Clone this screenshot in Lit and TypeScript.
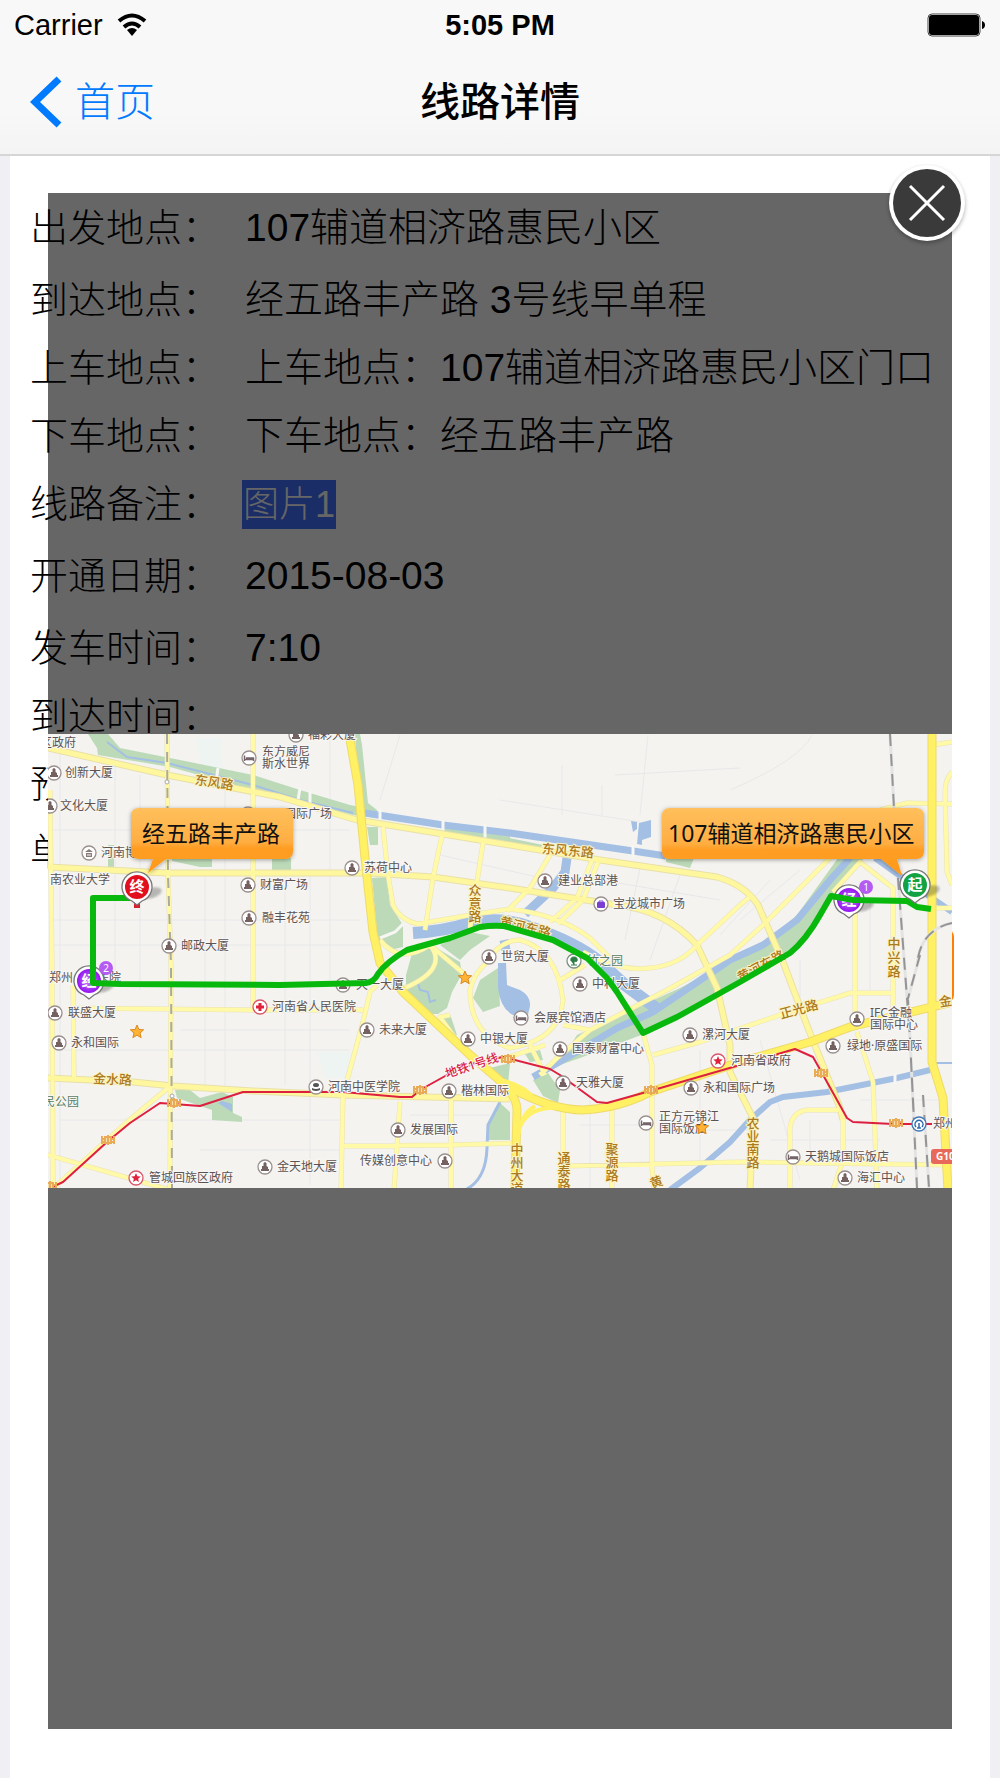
import { LitElement, html, svg, css } from "lit";
import { customElement, state } from "lit/decorators.js";

type Kind = "office" | "hotel" | "museum" | "school" | "mall" | "park" | "gov" | "hospital" | "rail";
/** icon kind, icon centre x, y, text x, lines of text */
type Poi = [Kind | null, number, number, number, string, string?];

const POIS: Poi[] = [
  ["office", 54, 773, 65, "创新大厦"],
  ["office", 50, 806, 60, "文化大厦"],
  ["museum", 89, 853, 101, "河南博物院"],
  ["office", 169, 946, 181, "邮政大厦"],
  ["office", 248, 885, 260, "财富广场"],
  ["office", 249, 918, 262, "融丰花苑"],
  ["hotel", 249, 758, 262, "东方威尼", "斯水世界"],
  ["office", 248, 814, 284, "国际广场"],
  ["office", 296, 735, 308, "福彩大厦"],
  ["office", 352, 868, 364, "苏荷中心"],
  ["office", 545, 881, 558, "建业总部港"],
  ["mall", 601, 904, 613, "宝龙城市广场"],
  ["office", 489, 957, 501, "世贸大厦"],
  ["park", 574, 961, 587, "竹之园"],
  ["office", 580, 984, 592, "中科大厦"],
  ["hotel", 521, 1018, 534, "会展宾馆酒店"],
  ["office", 468, 1039, 480, "中银大厦"],
  ["office", 560, 1049, 572, "国泰财富中心"],
  ["office", 563, 1083, 576, "天雅大厦"],
  ["office", 690, 1035, 702, "漯河大厦"],
  ["gov", 718, 1061, 731, "河南省政府"],
  ["office", 691, 1088, 703, "永和国际广场"],
  ["hotel", 646, 1123, 659, "正方元锦江", "国际饭店"],
  ["office", 857, 1019, 870, "IFC金融", "国际中心"],
  ["office", 833, 1046, 847, "绿地·原盛国际"],
  ["rail", 919, 1124, 933, "郑州站"],
  ["hotel", 793, 1157, 805, "天鹅城国际饭店"],
  ["office", 845, 1178, 857, "海汇中心"],
  ["office", 55, 1013, 68, "联盛大厦"],
  ["office", 59, 1043, 71, "永和国际"],
  ["gov", 136, 1178, 149, "管城回族区政府"],
  ["office", 265, 1167, 277, "金天地大厦"],
  ["office", 343, 985, 356, "天一大厦"],
  ["hospital", 260, 1007, 272, "河南省人民医院"],
  ["office", 367, 1030, 379, "未来大厦"],
  ["school", 316, 1087, 328, "河南中医学院"],
  ["office", 449, 1091, 461, "楷林国际"],
  ["office", 398, 1130, 410, "发展国际"],
  ["office", 445, 1161, 360, "传媒创意中心"],
  [null, 0, 743, 40, "区政府"],
  [null, 0, 880, 50, "南农业大学"],
  [null, 0, 978, 49, "郑州人民医院"],
];

/** text, x, y, rotation */
const ROADS: [string, number, number, number][] = [
  ["东风路", 195, 779, 9],
  ["东风东路", 542, 848, 5],
  ["黄河东路", 500, 921, 13],
  ["金水路", 93, 1078, 3],
  ["正光路", 780, 1014, -15],
  ["黄河东路", 738, 978, -28],
  ["金", 939, 1002, -10],
  ["黄", 650, 1184, -20],
];

/** text, x, first y, step */
const VERTICAL_ROADS: [string, number, number, number][] = [
  ["众意路", 475, 890, 13],
  ["聚源路", 612, 1149, 13],
  ["通泰路", 564, 1158, 13],
  ["中州大道", 517, 1149, 13],
  ["农业南路", 753, 1123, 13],
  ["中兴路", 894, 943, 14],
];

const GREENS = [
  "M88 734H108L120 748L190 762L253 775L300 790L350 805L377 810V818L353 815L253 790L170 767L98 755L97 748Z",
  "M355 734H360L362 745L368 803L377 810L360 814Z",
  "M367 827H378V845H370Z",
  "M372 878L387 877L390 905L403 925V947L390 950L378 942Z",
  "M172 858H212V867H200L172 861Z",
  "M272 858H291V872H272Z",
  "M108 845H114V867H108Z",
  "M413 950L430 944L460 962L462 974L452 992L447 1008L438 1014L428 1014L406 998V975Z",
  "M438 1018L450 1014L457 1035L448 1034Z",
  "M480 980L498 968L500 1006L483 1012L473 998Z",
  "M440 945L470 932L490 936L470 950L460 960Z",
  "M838 858H864L832 896L818 922L795 950L741 982L644 1034L580 1058L557 1066L577 1035L680 988L763 945L797 915Z",
  "M666 858H694L690 868L666 862Z",
  "M443 825L510 836V844L443 832Z",
  "M500 836L543 845L538 850L500 843Z",
  "M487 1140V1125L500 1103L510 1112V1140Z",
  "M533 1080L548 1073L560 1090L558 1103L543 1096Z",
  "M525 1054L540 1050L543 1060L530 1062Z",
  "M482 1070L510 1063L508 1085L495 1080Z",
  "M175 1090L190 1090L200 1098L222 1092L233 1097V1113L242 1117V1122L212 1120V1110L177 1098Z",
];

const WATERS: [string, number][] = [
  ["M107 742L127 757L167 763L253 785L300 800L353 813", 2],
  ["M365 813L443 825L510 833L633 851L666 856", 7],
  ["M875 858L903 878L952 912", 6],
  ["M413 933Q445 931 470 923Q500 916 530 927Q575 942 600 962L625 985L656 1008", 12],
  ["M567 858L565 872L553 888L525 914", 9],
  ["M850 858L830 880L797 920L763 945L730 960L653 1012L617 1028L580 1050L533 1077", 7],
  ["M952 1063L930 1063", 2],
  ["M930 1070L897 1078L827 1092L783 1097L770 1102L750 1120L730 1142L700 1168L670 1190", 6],
  ["M500 1102L488 1125L487 1148Q486 1180 465 1190", 3],
  ["M417 980L420 990L428 992L430 1002L436 1000", 2],
  ["M504 940L506 950", 9],
];

const FINE_ROADS = [
  "M60 735V1188M115 760V980M140 775V990M205 870V1085M225 775V1090M285 820V1085M310 870V1185M330 735V980",
  "M50 830H350M50 920H360M50 945H370M50 1050H350M180 1030H350M60 1120H340M200 1150H340",
  "M400 735L380 800M562 765V815M602 785V815M648 735L640 815M500 800L640 822M615 775L740 768",
  "M730 790Q800 760 812 735M440 855L550 880M600 880L720 900M640 868L625 940M680 875L650 960",
  "M770 880L720 935M800 870L740 920M800 960V1010M870 900V990M760 1040L800 1180M660 1130H750M410 1115H490",
  "M700 1050V1160M580 1125H640M590 1100V1188M810 1120V1160M860 1100H940M770 1140H880",
];

const SMALL_ROADS = [
  "M167 734L168 875L171 965L170 1188",
  "M253 734V1010",
  "M50 790L52 965L53 1188",
  "M73 985L74 1078",
  "M73 1008L253 1010L363 1010",
  "M168 1088L127 1122L57 1185",
  "M48 1155L170 1190",
  "M377 985L370 992L363 1022L343 1095L341 1190",
  "M343 1146L450 1145L515 1143M400 1102L394 1190M451 1100V1190",
  "M383 827L388 875L393 905Q400 920 418 924L470 915L510 909Q560 915 590 938L610 958",
  "M442 835L433 878L425 930M483 843L477 882L470 928",
  "M550 855L530 888L507 911M592 860L577 898L550 922M598 862L583 900L558 924",
  "M487 962Q500 940 520 940Q557 950 563 1000Q560 1040 510 1048Q470 1035 470 990Q473 975 487 962Z",
  "M380 940Q400 965 430 945L463 973M430 945Q450 970 400 990M557 982L585 965M563 1025L590 1030",
  "M583 952Q620 972 650 968Q680 965 697 945L740 905L752 895",
  "M540 1075L557 1058L590 1030L667 990L730 955L763 925L830 858",
  "M643 1033L652 1065V1168L654 1190M563 1112V1190M612 1105V1190M567 1166L740 1162L952 1165",
  "M653 1055L700 1042L780 1015L850 993H893M855 910V1027",
  "M833 892L860 862L893 888V1010M857 1032L873 1082L877 1190",
  "M790 1190V1128Q792 1112 807 1110H840M843 1118V1160L833 1190",
  "M933 745L952 742M880 810L907 803L952 804M952 772Q945 780 945 792L947 872L952 885M930 908H952",
  "M450 1015L440 1017L460 1045M480 1065L515 1055L545 1045M530 1045L545 1075",
];

const MID_ROADS = [
  "M48 748L167 775L280 797L357 820L437 833L510 845L600 860L717 877Q745 885 758 905L783 962L808 1028L840 1108L843 1120",
  "M48 867L167 873H370L433 877L510 888L617 905Q665 910 697 945L717 988L730 1045V1072L753 1118L750 1190",
  "M48 1078L133 1082L173 1086L253 1091L343 1095L510 1099",
];

const BIG_ROADS = [
  "M349 734L358 785L365 858L373 932L380 963L403 992L470 1055L497 1078Q517 1095 517 1110L515 1190",
  "M505 1085Q550 1110 583 1110Q620 1108 650 1092L740 1062L810 1042L850 1027L952 1002",
  "M932 734V1062L943 1098L948 1190",
];

const METRO =
  "M48 1189L63 1182L107 1142L130 1123L160 1103L200 1106L243 1092H343L400 1097L412 1097L420 1090L447 1075L477 1062L503 1057L550 1069L560 1075L597 1102L607 1103L650 1091L740 1065L795 1049L813 1057L822 1073L847 1118L853 1122L893 1124H932";

const ROUTE =
  "M137 898H93V983L120 984L280 985L366 983Q374 982 378 974Q386 962 407 950L450 938L480 927Q492 925 504 926L553 940L587 958L607 978L617 992L643 1033L677 1017L740 982L790 953Q806 940 820 915L831 896L853 900L907 901L917 907L931 909";

const METRO_STOPS = [[50, 1186], [108, 1140], [174, 1103], [420, 1090], [508, 1059], [651, 1090], [821, 1073], [896, 1123]];
const STARS = [[137, 1032], [465, 978]];

const starPath = (r: number) =>
  "M" +
  Array.from({ length: 10 }, (_, i) => {
    const a = (Math.PI / 5) * i - Math.PI / 2;
    const q = i % 2 ? r * 0.45 : r;
    return `${(q * Math.cos(a)).toFixed(2)} ${(q * Math.sin(a)).toFixed(2)}`;
  }).join("L") +
  "Z";

const star = (x: number, y: number) =>
  svg`<path transform="translate(${x} ${y})" d=${starPath(7)} fill="#ffb234" stroke="#d98b1f"/>`;

const poiIcon = (kind: Kind, x: number, y: number) => {
  const ring = (color: string) => svg`<circle r="7" fill="#fff" stroke=${color} stroke-width="1.3"/>`;
  const shape = {
    office: svg`${ring("#9a8f8f")}<path d="M-4 4V2H-3V-1H-1.5V-4L0 -5L1.5 -4V-1L3 0V2H4V4Z" fill="#75615f"/>`,
    hotel: svg`${ring("#9a8f8f")}<path d="M-4.500 -2.500V3M-4.500 1.500H4.500V3M-3 0H4.500V1.500" stroke="#75656a" stroke-width="1.5" fill="none"/>`,
    museum: svg`${ring("#9a8f8f")}<path d="M-4 -1L0 -4L4 -1ZM-3 0H3V4H-3Z" fill="#8a7c78"/><path d="M-1 1V3M1 1V3" stroke="#fff"/>`,
    school: svg`${ring("#9a8f8f")}<ellipse cy="-2" rx="3" ry="2" fill="#555"/><path d="M-4 1Q0 3 4 1V3Q0 5 -4 3Z" fill="#555"/>`,
    mall: svg`${ring("#9a8f8f")}<path d="M-3 -1H3V3H-3Z" fill="#7a3fd0" stroke="#7a3fd0" stroke-width="2" stroke-linejoin="round"/><path d="M-2 -1V-3H2V-1" fill="none" stroke="#7a3fd0"/>`,
    park: svg`${ring("#7d9180")}<path d="M-3 0Q-4 -4 0 -4Q4 -4 3 0Q2 1 0 0V4M-3 4H3" fill="#2f7d46" stroke="#2f7d46"/>`,
    gov: svg`${ring("#d9556a")}<path d=${starPath(5)} fill="#e0203c"/>`,
    hospital: svg`${ring("#d9556a")}<path d="M-4 0H4M0 -4V4" stroke="#e0203c" stroke-width="3"/>`,
    rail: svg`${ring("#3f78b8")}<path d="M-3 3A4 4 0 1 1 3 3M0 -1V4M-2 4H2" fill="none" stroke="#2f69ad" stroke-width="1.5"/>`,
  }[kind];
  return svg`<g transform="translate(${x} ${y})">${shape}</g>`;
};

const pinBody = (x: number, y: number, fill: string) => svg`
  <ellipse cx=${x + 15} cy=${y + 6} rx="10" ry="5" fill="#000" opacity=".25" filter="url(#blur)" transform="rotate(-18 ${x + 15} ${y + 6})"/>
  <path d="M${x} ${y + 18}L${x - 5} ${y + 14}A15 15 0 1 1 ${x + 5} ${y + 14}Z" fill="#fff" stroke="#777" stroke-width="1.3"/>
  <circle cx=${x} cy=${y} r="12" fill=${fill}/>`;

const pinText = (x: number, y: number, t: string) =>
  svg`<text class="pin" x=${x} y=${y + 5}>${t}</text>`;

const badge = (x: number, y: number, t: string) =>
  svg`<circle cx=${x} cy=${y} r="7" fill="#b45cf2"/><text class="badge" x=${x} y=${y + 4}>${t}</text>`;

@customElement("route-map")
export class RouteMap extends LitElement {
  static styles = css`
    :host { display: block; }
    .map { display: block; width: 100%; height: auto; background: #f4f3f0; overflow: hidden; }
    text { font-family: "Noto Sans", "Noto Sans CJK SC", sans-serif; }
    .poi { font-size: 12px; fill: #5c5353; stroke: #f8f7f5; stroke-width: 2px; paint-order: stroke; }
    .green { fill: #5b7d63; }
    .road { font-size: 13px; fill: #ab7a1e; font-weight: 500; stroke: #fbf3c4; stroke-width: 2px; paint-order: stroke; }
    .vertical { text-anchor: middle; }
    .line { font-size: 12px; fill: #d8203f; font-weight: 500; stroke: #f8f7f5; stroke-width: 2px; paint-order: stroke; }
    .shield { font-size: 10px; font-weight: 700; fill: #fff; }
    .pin { font-size: 15px; font-weight: 700; fill: #fff; text-anchor: middle; }
    .badge { font-size: 10px; fill: #fff; text-anchor: middle; }
    .callout { font-size: 23px; fill: #111; }
  `;

  render() {
    return html`<svg class="map" viewBox="48 734 904 454" role="img" aria-label="线路地图">
      <defs>
        <linearGradient id="callout" x1="0" y1="0" x2="0" y2="1">
          <stop offset="0" stop-color="#ffc05c"/>
          <stop offset=".52" stop-color="#ffae42"/>
          <stop offset=".62" stop-color="#ff9d22"/>
          <stop offset="1" stop-color="#ff9a1c"/>
        </linearGradient>
        <radialGradient id="purple"><stop offset="0" stop-color="#c77bff"/><stop offset="1" stop-color="#9314ef"/></radialGradient>
        <filter id="shadow" x="-10%" y="-10%" width="120%" height="140%">
          <feDropShadow dx="0" dy="1" stdDeviation="2" flood-opacity=".35"/>
        </filter>
        <filter id="blur"><feGaussianBlur stdDeviation="1"/></filter>
      </defs>
      <path d=${FINE_ROADS.join("")} fill="none" stroke="#e8e8ea" stroke-width="1"/>
      <path d="M196 738H222V780H204ZM317 1052H350V1078H325Z" fill="#edf4f2"/>
      <path d=${GREENS.join("")} fill="#bcdab8"/>
      ${WATERS.map(([d, w]) => svg`<path d=${d} fill="none" stroke="#a3bfe3" stroke-width=${w}/>`)}
      <path d="M498 963H506L507 985L520 990Q531 996 530 1006L528 1015H513Q500 1008 498 988ZM631 821L637 822V829L633 832ZM639 823L651 820V837L642 840V845L637 844ZM222 1101L232 1104V1112L218 1103Z" fill="#a3bfe3"/>
      <path d="M380 809V822M443 820V832M485 824V838M633 845V858M300 788L297 806M310 790V808M218 768L216 782M895 1074V1084M380 938L395 932L403 924" fill="none" stroke="#f6f6f3" stroke-width="3"/>
      <g fill="none" stroke-linejoin="round">
        <path d=${SMALL_ROADS.join("")} stroke="#e9e3b4" stroke-width="5"/>
        <path d=${MID_ROADS.join("")} stroke="#e9e0a8" stroke-width="7"/>
        <path d=${SMALL_ROADS.join("")} stroke="#fff9a8" stroke-width="4"/>
        <path d=${MID_ROADS.join("")} stroke="#fff79e" stroke-width="5"/>
        <path d=${BIG_ROADS.join("")} stroke="#eedb6a" stroke-width="9"/>
        <path d=${BIG_ROADS.join("")} stroke="#fff064" stroke-width="7"/>
        <path d="M517 1148Q518 1115 535 1106M517 1140Q520 1105 560 1108M500 1080Q525 1085 535 1100" stroke="#fff064" stroke-width="4"/>
        <path d="M167 734L168 875L171 965L172 1188" stroke="#aaa9a2" stroke-width="2" stroke-dasharray="10 8"/>
        <path d="M890 734L894 808M898 878L910 1038L917 1188M920 955L907 1002M923 1095L929 1188M952 923Q920 930 917 965M908 1000L914 1120" stroke="#e3e3e3" stroke-width="3"/>
        <path d="M890 734L894 808M898 878L910 1038L917 1188M920 955L907 1002M923 1095L929 1188M952 923Q920 930 917 965M908 1000L914 1120" stroke="#949494" stroke-width="2" stroke-dasharray="12 8"/>
        <path d=${METRO} stroke="#dd1f40" stroke-width="2"/>
      </g>
      <circle cx="167" cy="782" r="2" fill="#fff" stroke="#aaa"/>
      <circle cx="172" cy="1096" r="2" fill="#fff" stroke="#aaa"/>
      ${METRO_STOPS.map(
        ([x, y]) => svg`<g transform="translate(${x} ${y})" stroke="#e9ab58" stroke-width="2">
          <path d="M-6 -4V4M6 -4V4M0 -5V5M-7 -1H7M-7 2H7" fill="none"/>
          <rect x="-3" y="-3" width="6" height="6" fill="#f9dfae"/><path d="M0 -5V5"/></g>`
      )}
      ${STARS.map(([x, y]) => star(x, y))}
      ${ROADS.map(([t, x, y, a]) => svg`<text class="road" transform="translate(${x} ${y}) rotate(${a})" y="5">${t}</text>`)}
      ${VERTICAL_ROADS.map(
        ([t, x, y, s]) => svg`<text class="road vertical" x=${[...t].map(() => x).join(" ")} y=${[...t].map((_, i) => y + i * s + 5).join(" ")}>${t}</text>`
      )}
      <text class="line" transform="translate(447 1078) rotate(-18)">地铁1号线</text>
      <text class="poi green" x="43" y="1106">民公园</text>
      ${POIS.map(([k, ix, y, x, a, b]) => svg`
        ${k ? poiIcon(k, ix, y) : null}
        <text class="poi ${k === "park" ? "green" : ""}" x=${x} y=${b ? y - 2 : y + 4}>${a}</text>
        ${b ? svg`<text class="poi" x=${x} y=${y + 10}>${b}</text>` : null}`)}
      ${star(702, 1128)}
      <rect x="931" y="1149" width="30" height="15" rx="3" fill="#e8695a"/>
      <text class="shield" x="936" y="1160">G107</text>

      ${pinBody(849, 900, "url(#purple)")}${pinText(849, 900, "经")}
      ${pinBody(89, 981, "url(#purple)")}${pinText(89, 981, "经")}
      <path d=${ROUTE} fill="none" stroke="#08b80c" stroke-width="6" stroke-linejoin="round"/>
      ${badge(866, 887, "1")}${badge(106, 968, "2")}
      <rect x="134" y="902" width="6" height="6" fill="#d8202c"/>
      ${pinBody(137, 887, "#e2101f")}${pinText(137, 887, "终")}
      ${pinBody(915, 885, "#12a243")}${pinText(915, 885, "起")}

      <g fill="url(#callout)" filter="url(#shadow)">
        <path d="M139 808H285Q293 808 293 816V851Q293 859 285 859H166L148 873L153 859H139Q131 859 131 851V816Q131 808 139 808Z"/>
        <path d="M670 808H916Q924 808 924 816V851Q924 859 916 859H897L902 876L881 859H670Q662 859 662 851V816Q662 808 670 808Z"/>
      </g>
      <text class="callout" x="142" y="842">经五路丰产路</text>
      <text class="callout" x="668" y="842">107辅道相济路惠民小区</text>
    </svg>`;
  }
}

interface Row {
  label: string;
  value?: string;
  link?: boolean;
  spaced?: boolean;
}

const ROWS: Row[] = [
  { label: "出发地点：", value: "107辅道相济路惠民小区", spaced: true },
  { label: "到达地点：", value: "经五路丰产路 3号线早单程" },
  { label: "上车地点：", value: "上车地点：107辅道相济路惠民小区门口" },
  { label: "下车地点：", value: "下车地点：经五路丰产路" },
  { label: "线路备注：", value: "图片1", link: true, spaced: true },
  { label: "开通日期：", value: "2015-08-03", spaced: true },
  { label: "发车时间：", value: "7:10" },
  { label: "到达时间：" },
  { label: "预" },
  { label: "单" },
];

@customElement("app-root")
export class AppRoot extends LitElement {
  static styles = css`
    :host {
      display: flex;
      flex-direction: column;
      min-height: 100vh;
      background: #efeff4;
      color: #000;
      font-family: "Liberation Sans", "Noto Sans CJK SC", sans-serif;
    }
    button { font: inherit; border: 0; margin: 0; cursor: pointer; }
    .header {
      background: linear-gradient(#f8f8f8 70%, #f4f4f4);
      border-bottom: 2px solid #d6d6d6;
    }
    .status, .nav { display: grid; grid-template-columns: 1fr auto 1fr; align-items: center; }
    .status { height: 50px; padding: 0 14px; font-size: 29px; }
    .carrier { display: flex; align-items: center; gap: 14px; }
    .time { font-weight: 700; }
    .battery { justify-self: end; }
    .nav { height: 104px; padding: 0 30px; line-height: 52px; }
    .back {
      display: flex;
      align-items: center;
      gap: 13px;
      justify-self: start;
      color: #007aff;
      font-size: 40px;
      font-weight: 300;
      text-decoration: none;
    }
    .title { margin: 0; font-size: 40px; font-weight: 500; }
    .content { position: relative; flex: 1; margin: 0 10px; background: #fff; padding: 38px 36px 49px 20px; }
    .rows { margin: 0; font-size: 38px; font-weight: 300; line-height: 68px; }
    .row { display: grid; grid-template-columns: 215px 1fr; align-items: center; height: 68px; white-space: nowrap; }
    .spaced { margin-bottom: 4px; }
    .value { margin: 0; font-size: 39px; }
    .chip { display: block; margin-left: -3px; padding: 0 1px; height: 49px; line-height: 49px; background: #4170ff; color: #fff; font-size: 36px; font-weight: 300; }
    .submit { display: block; width: 90%; height: 74px; margin: 43px 0 0 auto; border-radius: 8px; background: #ff8000; }
    .overlay {
      position: absolute;
      inset: 37px 38px 49px;
      display: flex;
      align-items: center;
      background: rgba(0, 0, 0, 0.6);
    }
    .picture { flex: 1; }
    .close { position: absolute; top: -29px; right: -19px; padding: 0; background: none; }
    .close svg { display: block; }
  `;

  @state() private open = true;

  render() {
    return html`
      <header class="header">
        <div class="status">
          <span class="carrier">Carrier
            <svg width="30" height="24" viewBox="0 0 30 24" fill="none" stroke="#000" stroke-width="4" aria-hidden="true">
              <path d="M2 8Q15 -3 28 8"/><path d="M7 14Q15 7 23 14"/><path d="M15 23L10 17Q15 13 20 17Z" fill="#000" stroke="none"/>
            </svg>
          </span>
          <span class="time">5:05 PM</span>
          <svg class="battery" width="59" height="24" viewBox="0 0 59 24" aria-hidden="true">
            <rect x="1" y="1" width="52" height="22" rx="4" fill="#fff" stroke="#444"/>
            <rect x="2" y="2" width="50" height="20" rx="3"/>
            <path d="M55 8Q58 9 58 12Q58 15 55 16Z"/>
          </svg>
        </div>
        <nav class="nav">
          <a class="back" href="#home">
            <svg width="32" height="52" viewBox="0 0 32 52" fill="none" stroke="#007aff" stroke-width="7" aria-hidden="true"><path d="M29 3L5 26L29 49"/></svg>
            首页
          </a>
          <h1 class="title">线路详情</h1>
        </nav>
      </header>
      <main class="content">
        <dl class="rows">
          ${ROWS.map((r) => html`<div class="row ${r.spaced ? "spaced" : ""}">
            <dt>${r.label}</dt>
            <dd class="value">${r.link
              ? html`<button class="chip" @click=${() => (this.open = true)}>${r.value}</button>`
              : r.value}</dd>
          </div>`)}
        </dl>
        <button class="submit" aria-label="预订"></button>
        ${this.open
          ? html`<div class="overlay" role="dialog" aria-label="图片1">
              <route-map class="picture"></route-map>
              <button class="close" aria-label="关闭" @click=${() => (this.open = false)}>
                <svg width="88" height="88" viewBox="0 0 88 88" fill="none">
                  <defs><filter id="soft"><feGaussianBlur stdDeviation="2"/></filter></defs>
                  <circle cx="44" cy="41" r="38" fill="#000" opacity=".3" filter="url(#soft)"/>
                  <circle cx="44" cy="39" r="38" fill="#fff"/>
                  <circle cx="44" cy="39" r="34" fill="#3a3a3a"/>
                  <path d="M27 22L61 56M61 22L27 56" stroke="#fff" stroke-width="3"/>
                </svg>
              </button>
            </div>`
          : null}
      </main>
    `;
  }
}
